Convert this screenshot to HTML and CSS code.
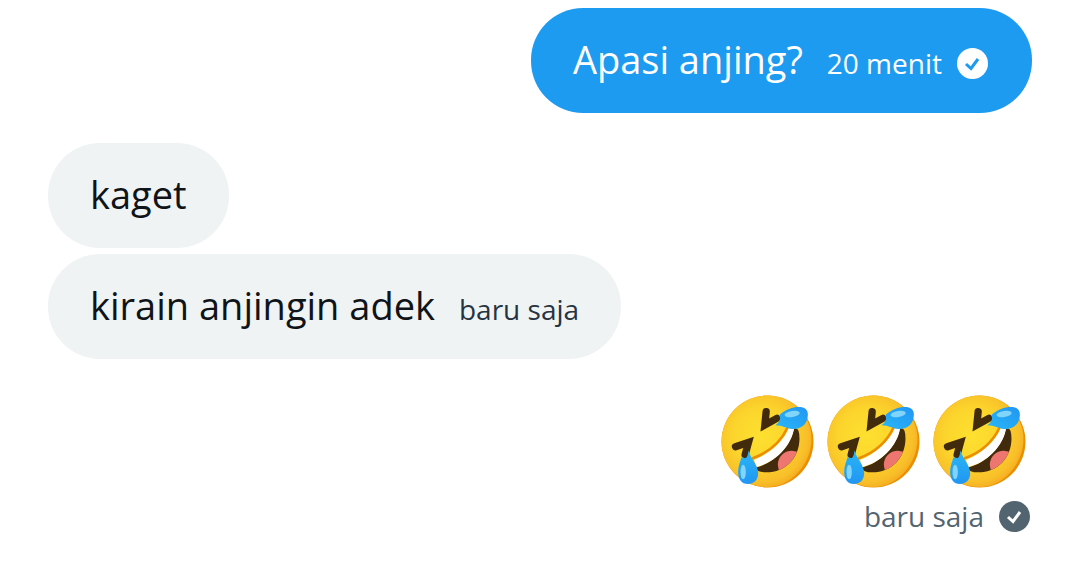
FILE: index.html
```html
<!DOCTYPE html>
<html lang="id">
<head>
<meta charset="utf-8">
<meta name="viewport" content="width=device-width, initial-scale=1">
<title>Pesan</title>
<link rel="stylesheet" href="styles.css">
</head>
<body>
<svg class="defs" aria-hidden="true">
  <defs>
    <radialGradient id="face" gradientUnits="userSpaceOnUse" cx="118" cy="122" r="164">
      <stop offset="0" stop-color="#fde030"/>
      <stop offset=".5" stop-color="#fcd52c"/>
      <stop offset=".86" stop-color="#f8be29"/>
      <stop offset="1" stop-color="#f4a81e"/>
    </radialGradient>
    <linearGradient id="tear-a" x1="0" y1="1" x2="1" y2="0">
      <stop offset="0" stop-color="#29b6f6"/>
      <stop offset="1" stop-color="#2196f3"/>
    </linearGradient>
    <linearGradient id="tear-b" x1="0" y1="0" x2="0" y2="1">
      <stop offset="0" stop-color="#29b6f6"/>
      <stop offset="1" stop-color="#2196f3"/>
    </linearGradient>
    <clipPath id="mouth">
      <path d="M102 218C155 205 207 157 217 101Q234 94 234 131C233 188 193 232 134 232Q106 232 102 218Z"/>
    </clipPath>
  </defs>
  <symbol id="rofl" viewBox="0 0 276 279">
    <circle cx="138" cy="139.500" r="138" fill="#eb8f00"/>
    <path d="M138 1.500C211 1.500 270 60 270 132S211 276 138 276 0 216 0 140 62 1.500 138 1.500Z" fill="url(#face)"/>
    <path d="M94 190C145 171 181 136 199 96" fill="none" stroke="#eb8f00" stroke-width="8" stroke-linecap="round"/>
    <path d="M102 218C155 205 207 157 217 101Q234 94 234 131C233 188 193 232 134 232Q106 232 102 218Z" fill="#422b0d"/>
    <circle cx="211" cy="209" r="42" fill="#ed7770" clip-path="url(#mouth)"/>
    <path d="M99 194C149 174 187 137 202 99H218C210 153 160 203 106 215Q98 207 99 194Z" fill="#fff"/>
    <g fill="none" stroke="#422b0d" stroke-width="22" stroke-linecap="round" stroke-miterlimit="8">
      <path d="M134 50L130 90L166 70"/>
      <path d="M42 155L81 142L71 179"/>
    </g>
    <path d="M174 60C195 41 221 34 241 37C256 40 262 51 258 69C254 90 237 103 212 102C193 101 184 91 162 91Q172 84 176 72Z" fill="url(#tear-a)"/>
    <ellipse cx="212" cy="57" rx="23" ry="9" transform="rotate(-9 212 57)" fill="#81d4fa"/>
    <path d="M80 166C89 193 109 209 110 234C110 255 97 267 79 267C61 267 50 253 50 231C50 213 56 201 60 187L72 190Q81 183 80 166Z" fill="url(#tear-b)"/>
    <ellipse cx="65" cy="231" rx="8" ry="22" fill="#81d4fa"/>
  </symbol>
  <symbol id="check" viewBox="0 0 31 31">
    <circle cx="15.500" cy="15.500" r="15.500" fill="currentColor"/>
    <path class="tick" d="M9 16L14 20.500L21 11"/>
  </symbol>
</svg>
<main class="chat">
  <article class="bubble sent">
    <span class="text">Apasi anjing?</span>
    <span class="meta"><time>20 menit</time><svg class="check" role="img" aria-label="Terkirim"><use href="#check"/></svg></span>
  </article>
  <section class="group">
    <article class="bubble received"><span class="text">kaget</span></article>
    <article class="bubble received">
      <span class="text">kirain anjingin adek</span>
      <span class="meta"><time>baru saja</time></span>
    </article>
  </section>
  <article class="reaction">
    <div class="emojis" role="img" aria-label="Tertawa terguling">
      <svg class="emoji"><use href="#rofl"/></svg>
      <svg class="emoji"><use href="#rofl"/></svg>
      <svg class="emoji"><use href="#rofl"/></svg>
    </div>
    <span class="meta"><time>baru saja</time><svg class="check" role="img" aria-label="Terkirim"><use href="#check"/></svg></span>
  </article>
</main>
</body>
</html>
```
FILE: styles.css
```css
* {
  box-sizing: border-box;
}

body {
  margin: 0;
  background: #fff;
  color: #0f1419;
  font-family: "Open Sans", "Noto Sans", sans-serif;
}

.defs {
  position: absolute;
  width: 0;
  height: 0;
}

.chat {
  display: flex;
  flex-direction: column;
  padding: 8px 48px;
}

.group {
  display: flex;
  flex-direction: column;
  align-items: flex-start;
  gap: 6px;
  margin: 30px 0 36px;
}

.bubble {
  display: flex;
  align-items: baseline;
  gap: 24px;
  padding: 25px 42px 28px;
  border-radius: 52px;
}

.received {
  background: #eff3f4;
}

.sent {
  align-self: flex-end;
  padding-right: 44px;
  background: #1d9bf0;
  color: #fff;
  --tick: #1d9bf0;
}

.text {
  font-size: 38px;
  line-height: 52px;
}

.meta {
  display: flex;
  align-items: center;
  gap: 15px;
  font-size: 28px;
  line-height: 40px;
}

.received .meta {
  color: #273340;
}

.check {
  width: 31px;
  height: 31px;
}

.tick {
  fill: none;
  stroke: var(--tick);
  stroke-width: 3;
}

.reaction {
  display: flex;
  flex-direction: column;
  align-items: flex-end;
  gap: 8px;
  color: #536471;
  --tick: #fff;
}

.emojis {
  display: flex;
  gap: 13px;
  padding-right: 6px;
}

.emoji {
  width: 93px;
  height: 93px;
}

.reaction .meta {
  padding-right: 2px;
}
```
